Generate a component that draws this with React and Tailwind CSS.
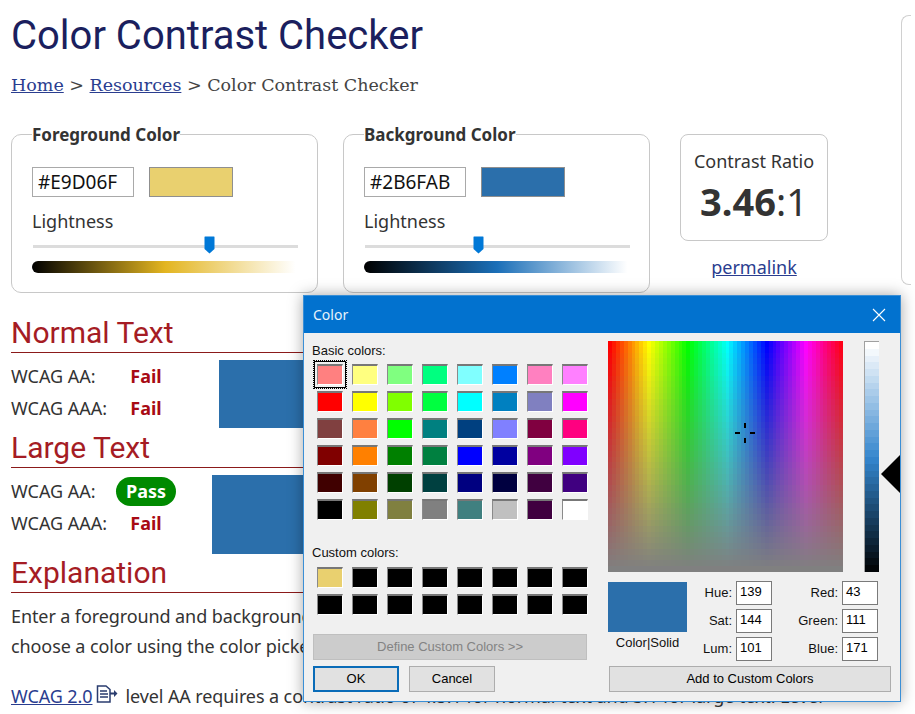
import React from 'react';

const basicColors = [
  '#ff8080', '#ffff80', '#80ff80', '#00ff80', '#80ffff', '#0080ff', '#ff80c0', '#ff80ff',
  '#ff0000', '#ffff00', '#80ff00', '#00ff40', '#00ffff', '#0080c0', '#8080c0', '#ff00ff',
  '#804040', '#ff8040', '#00ff00', '#008080', '#004080', '#8080ff', '#800040', '#ff0080',
  '#800000', '#ff8000', '#008000', '#008040', '#0000ff', '#0000a0', '#800080', '#8000ff',
  '#400000', '#804000', '#004000', '#004040', '#000080', '#000040', '#400040', '#400080',
  '#000000', '#808000', '#808040', '#808080', '#408080', '#c0c0c0', '#400040', '#ffffff',
];

const customColors = ['#e9d06f', ...Array(15).fill('#000000')];

function Swatch({ color, selected }) {
  return (
    <div className="relative w-[26px] h-[21px]">
      <div
        className="w-full h-full border-t-2 border-l border-t-[#777777] border-l-[#8a8a8a] border-b border-r border-b-white border-r-white"
        style={{ backgroundColor: color }}
      />
      {selected && (
        <div className="absolute -inset-x-[3px] -inset-y-[3px] border border-black outline-1 outline-dotted outline-black" />
      )}
    </div>
  );
}

function SwatchGrid({ colors }) {
  return (
    <div className="grid grid-cols-[repeat(8,26px)] gap-x-[9px] gap-y-[6px] ml-[4px]">
      {colors.map((c, i) => (
        <Swatch key={i} color={c} selected={i === 0 && colors.length > 16} />
      ))}
    </div>
  );
}

function ColorField() {
  const cols = 60;
  const rows = 40;
  const rects = [];
  for (let y = 0; y < rows; y++) {
    for (let x = 0; x < cols; x++) {
      const hue = (x / cols) * 360;
      const sat = 100 - (y / (rows - 1)) * 100;
      rects.push(<rect key={x + '-' + y} x={x} y={y} width="1" height="1" fill={`hsl(${hue} ${sat}% 50%)`} />);
    }
  }
  return (
    <div className="relative w-[235px] h-[231px] shrink-0">
      <svg width="235" height="231" viewBox={`0 0 ${cols} ${rows}`} preserveAspectRatio="none" shapeRendering="crispEdges" className="block">
        {rects}
      </svg>
      <svg width="20" height="20" viewBox="0 0 20 20" className="absolute left-[127px] top-[82px]">
        <rect x="9" y="0" width="2" height="5" fill="#000" />
        <rect x="9" y="15" width="2" height="5" fill="#000" />
        <rect x="0" y="9" width="5" height="2" fill="#000" />
        <rect x="15" y="9" width="5" height="2" fill="#000" />
      </svg>
    </div>
  );
}

function LumBar() {
  const bands = 34;
  const rects = [];
  for (let i = 0; i < bands; i++) {
    const lum = 100 - (i / (bands - 1)) * 98;
    rects.push(<rect key={i} x="0" y={i} width="1" height="1" fill={`hsl(208 60% ${lum}%)`} />);
  }
  return (
    <svg width="15" height="231" viewBox={`0 0 1 ${bands}`} preserveAspectRatio="none" shapeRendering="crispEdges" className="block shrink-0 border-l border-t border-[#a0a0a0]">
      {rects}
    </svg>
  );
}

function SliderThumb() {
  return (
    <svg width="11" height="18" viewBox="0 0 11 18" className="block">
      <path d="M1 0.5 H10 Q10.5 0.5 10.5 1 V13 L5.5 17.5 L0.5 13 V1 Q0.5 0.5 1 0.5 Z" fill="#0078d7" />
    </svg>
  );
}

function ColorBox({ title, hex, gradient, thumbClass }) {
  return (
    <fieldset className="w-[307px] h-[170px] border border-[#c8c8c8] rounded-[10px] pl-[20px] pr-[18px] shrink-0">
      <legend className="font-bold text-[17px] leading-[22px] text-[#333333]">
        <span className="relative top-px">{title}</span>
      </legend>
      <div className="flex gap-[15px] mt-[22px]">
        <div className="w-[102px] h-[30px] border border-[#a9a9a9] pl-[5px] text-[19px] leading-[28px] text-[#111111]">{hex}</div>
        <div className="w-[84px] h-[30px] border border-[#8f8f8f]" style={{ backgroundColor: hex }} />
      </div>
      <div className="text-[18px] leading-[24px] mt-[12px] text-[#333333]">Lightness</div>
      <div className="relative h-[3px] mt-[12px] ml-[1px] w-[265px] bg-[#dcdcdc]">
        <div className={`absolute -top-[9px] ${thumbClass}`}>
          <SliderThumb />
        </div>
      </div>
      <div className={`h-[12px] w-[266px] mt-[13px] rounded-l-[6px] ${gradient}`} />
    </fieldset>
  );
}

function ResultRow({ label, pass }) {
  return (
    <div className="flex items-center h-[32px]">
      <span className="w-[105px] text-[18px] text-[#333333] whitespace-nowrap">{label}</span>
      {pass ? (
        <span className="w-[60px] h-[29px] rounded-full bg-[#008a00] text-white font-bold text-[18px] leading-[28px] text-center">Pass</span>
      ) : (
        <span className="w-[60px] text-center font-bold text-[18px] text-[#a80a14]">Fail</span>
      )}
    </div>
  );
}

function SectionHeading({ children }) {
  return (
    <h2 className="h-[39px] border-b border-[#8b1a1a] font-['Roboto',sans-serif] text-[30px] leading-[38px] text-[#a51c24]">
      {children}
    </h2>
  );
}

function HslField({ label, value, labelWidth }) {
  return (
    <div className="flex items-center gap-[4px] h-[24px]">
      <span className={`${labelWidth} text-right text-[#111111]`}>{label}</span>
      <div className="w-[36px] h-[24px] border border-[#7a7a7a] bg-white pl-[3px] leading-[20px] text-black">{value}</div>
    </div>
  );
}

function ColorDialog() {
  return (
    <div className="absolute left-[303px] top-[295px] w-[598px] h-[407px] border border-[#3a8fd6] bg-[#f0f0f0] shadow-[0_0_14px_rgba(0,0,0,0.35)] font-['Liberation_Sans',sans-serif] text-[13px]">
      <div className="flex items-center justify-between h-[37px] bg-[#0272cf] pl-[9px] pr-[14px] font-['Noto_Sans',sans-serif] text-[14px] text-[#e8f2fb]">
        <span>Color</span>
        <svg width="14" height="14" viewBox="0 0 14 14" fill="none" stroke="#ffffff" strokeWidth="1.1">
          <path d="M1 1 L13 13 M13 1 L1 13" />
        </svg>
      </div>
      <div className="flex pl-[8px] pt-[8px]">
        <div className="w-[275px] shrink-0">
          <div className="h-[19px] leading-[19px] text-[#111111]">Basic colors:</div>
          <div className="mt-[4px] ml-[1px]">
            <SwatchGrid colors={basicColors} />
          </div>
          <div className="h-[19px] leading-[19px] mt-[23px] text-[#111111]">Custom colors:</div>
          <div className="mt-[5px] ml-[1px]">
            <SwatchGrid colors={customColors} />
          </div>
          <div className="h-[26px] mt-[19px] ml-[1px] w-[274px] bg-[#cccccc] border border-[#bfbfbf] text-center leading-[24px] text-[#838383]">Define Custom Colors &gt;&gt;</div>
          <div className="flex gap-[10px] mt-[6px] ml-[1px]">
            <div className="w-[86px] h-[26px] bg-[#e1e1e1] border-2 border-[#0a6cb8] text-center leading-[22px] text-black">OK</div>
            <div className="w-[86px] h-[26px] bg-[#e1e1e1] border border-[#adadad] text-center leading-[24px] text-black">Cancel</div>
          </div>
        </div>
        <div className="ml-[21px] w-[293px] shrink-0">
          <div className="flex">
            <ColorField />
            <div className="ml-[21px] shrink-0">
              <LumBar />
            </div>
            <svg width="19" height="38" viewBox="0 0 19 38" className="shrink-0 ml-[2px] mt-[114px]">
              <path d="M19 0 V38 L0 19 Z" fill="#000000" />
            </svg>
          </div>
          <div className="flex mt-[9px]">
            <div className="w-[79px] pt-[1px]">
              <div className="h-[50px] bg-[#2b6fab]" />
              <div className="text-center leading-[22px] text-[#111111] whitespace-nowrap">Color|Solid</div>
            </div>
            <div className="flex flex-col gap-[4px] ml-[10px]">
              <HslField label="Hue:" value="139" labelWidth="w-[35px]" />
              <HslField label="Sat:" value="144" labelWidth="w-[35px]" />
              <HslField label="Lum:" value="101" labelWidth="w-[35px]" />
            </div>
            <div className="flex flex-col gap-[4px] ml-[20px]">
              <HslField label="Red:" value="43" labelWidth="w-[46px]" />
              <HslField label="Green:" value="111" labelWidth="w-[46px]" />
              <HslField label="Blue:" value="171" labelWidth="w-[46px]" />
            </div>
          </div>
          <div className="h-[26px] mt-[5px] ml-[1px] w-[282px] bg-[#e1e1e1] border border-[#adadad] text-center leading-[24px] text-black">Add to Custom Colors</div>
        </div>
      </div>
    </div>
  );
}

export default function App() {
  return (
    <div className="relative flex w-[915px] h-[714px] overflow-hidden bg-white font-['Noto_Sans',sans-serif] text-[#333333]">
      <main className="w-[891px] pl-[11px] shrink-0">
        <h1 className="h-[70px] font-['Roboto',sans-serif] text-[40px] leading-[72px] text-[#1b1f5e]">Color Contrast Checker</h1>
        <div className="h-[30px] font-['DejaVu_Serif',serif] text-[17.5px] leading-[30px] text-[#444444]">
          <a className="underline text-[#2a3d8f]">Home</a> &gt; <a className="underline text-[#2a3d8f]">Resources</a> &gt; Color Contrast Checker
        </div>
        <div className="flex mt-[23px]">
          <ColorBox
            title="Foreground Color"
            hex="#E9D06F"
            gradient="bg-[linear-gradient(to_right,#000000,#e3b520_50%,#ffffff_99%)]"
            thumbClass="left-[171px]"
          />
          <div className="ml-[25px] shrink-0">
            <ColorBox
              title="Background Color"
              hex="#2B6FAB"
              gradient="bg-[linear-gradient(to_right,#000000,#1b6fb8_50%,#ffffff_99%)]"
              thumbClass="left-[108px]"
            />
          </div>
          <div className="ml-[30px] mt-[11px] w-[148px] shrink-0">
            <div className="h-[107px] border border-[#c8c8c8] rounded-[8px] text-center">
              <div className="text-[18px] leading-[24px] mt-[14px]">Contrast Ratio</div>
              <div className="text-[38px] leading-[48px] mt-[4px]">
                <span className="font-bold">3.46</span>:1
              </div>
            </div>
            <div className="text-center text-[18px] leading-[24px] mt-[14px]">
              <a className="underline text-[#2a3d8f]">permalink</a>
            </div>
          </div>
        </div>
        <div className="mt-[21px]">
          <SectionHeading>Normal Text</SectionHeading>
          <div className="flex h-[76px]">
            <div className="mt-[7px]">
              <ResultRow label="WCAG AA:" />
              <ResultRow label="WCAG AAA:" />
            </div>
            <div className="w-[600px] h-[68px] mt-[7px] ml-[43px] bg-[#2b6fab]" />
          </div>
          <SectionHeading>Large Text</SectionHeading>
          <div className="flex h-[86px]">
            <div className="mt-[7px]">
              <ResultRow label="WCAG AA:" pass />
              <ResultRow label="WCAG AAA:" />
            </div>
            <div className="w-[600px] h-[79px] mt-[7px] ml-[36px] bg-[#2b6fab]" />
          </div>
          <SectionHeading>Explanation</SectionHeading>
          <p className="mt-[8px] text-[18px] tracking-[-0.1px] leading-[30px] w-[880px] whitespace-nowrap">
            Enter a foreground and background color in RGB hexadecimal format (e.g., #FD3 or #F7DA39) or<br />
            choose a color using the color picker.
          </p>
          <p className="mt-[20px] text-[18px] tracking-[-0.1px] leading-[30px] w-[880px] whitespace-nowrap">
            <a className="underline text-[#2a3d8f]">WCAG 2.0</a>
            <svg width="22" height="18" viewBox="0 0 22 18" className="inline-block align-top mt-[4px] ml-[4px] mr-[7px]">
              <path d="M1.5 1 H10 L14 4.5 V17 H1.5 Z" fill="#ffffff" stroke="#2a3d6f" strokeWidth="1.5" />
              <path d="M4 6 H11 M4 9 H12 M4 12 H12" stroke="#2a3d6f" strokeWidth="1.4" />
              <path d="M14 7.5 H18 V5 L21.5 8.5 L18 12 V9.5 H14 Z" fill="#2a3d6f" />
            </svg>
            level AA requires a contrast ratio of 4.5:1 for normal text and 3:1 for large text. Level
          </p>
        </div>
      </main>
      <aside className="w-[10px] h-[270px] ml-[10px] mt-[15px] border-l border-t border-b border-[#d0d0d0] rounded-l-[8px]" />
      <ColorDialog />
    </div>
  );
}
